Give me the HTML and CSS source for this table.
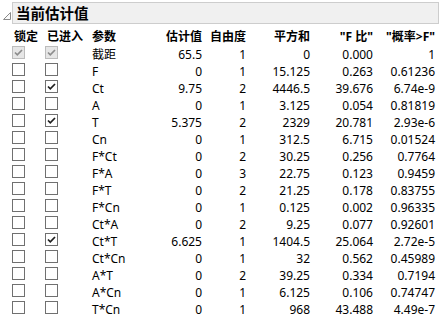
FILE: index.html
```html
<!DOCTYPE html>
<html lang="zh">
<head>
<meta charset="utf-8">
<link rel="stylesheet" href="styles.css">
</head>
<body>
<div class="titlebar">
  <svg class="tri" width="8" height="8" viewBox="0 0 8 8"><path d="M0.5 7.5 L7.5 0.5 L7.5 7.5 Z" fill="#fafafa" stroke="#8a8a8a" stroke-width="1"/></svg>
  <div class="titlebox">当前估计值</div>
</div>
<div class="table">
  <div class="row head">
    <div class="c1">锁定</div><div class="c2">已进入</div><div class="c3">参数</div>
    <div class="num">估计值</div><div class="num">自由度</div><div class="num">平方和</div><div class="num">"F 比"</div><div class="num">"概率&gt;F"</div>
  </div>
  <div class="row"><div class="c1"><span class="cb dis"><svg class="chk" viewBox="0 0 11 11"><path d="M2 5.5 L4.3 7.8 L9 3"/></svg></span></div><div class="c2"><span class="cb dis"><svg class="chk" viewBox="0 0 11 11"><path d="M2 5.5 L4.3 7.8 L9 3"/></svg></span></div><div class="c3">截距</div><div class="num">65.5</div><div class="num">1</div><div class="num">0</div><div class="num">0.000</div><div class="num">1</div></div>
  <div class="row"><div class="c1"><span class="cb"></span></div><div class="c2"><span class="cb"></span></div><div class="c3">F</div><div class="num">0</div><div class="num">1</div><div class="num">15.125</div><div class="num">0.263</div><div class="num">0.61236</div></div>
  <div class="row"><div class="c1"><span class="cb"></span></div><div class="c2"><span class="cb"><svg class="chk" viewBox="0 0 11 11"><path d="M2 5.5 L4.3 7.8 L9 3"/></svg></span></div><div class="c3">Ct</div><div class="num">9.75</div><div class="num">2</div><div class="num">4446.5</div><div class="num">39.676</div><div class="num">6.74e-9</div></div>
  <div class="row"><div class="c1"><span class="cb"></span></div><div class="c2"><span class="cb"></span></div><div class="c3">A</div><div class="num">0</div><div class="num">1</div><div class="num">3.125</div><div class="num">0.054</div><div class="num">0.81819</div></div>
  <div class="row"><div class="c1"><span class="cb"></span></div><div class="c2"><span class="cb"><svg class="chk" viewBox="0 0 11 11"><path d="M2 5.5 L4.3 7.8 L9 3"/></svg></span></div><div class="c3">T</div><div class="num">5.375</div><div class="num">2</div><div class="num">2329</div><div class="num">20.781</div><div class="num">2.93e-6</div></div>
  <div class="row"><div class="c1"><span class="cb"></span></div><div class="c2"><span class="cb"></span></div><div class="c3">Cn</div><div class="num">0</div><div class="num">1</div><div class="num">312.5</div><div class="num">6.715</div><div class="num">0.01524</div></div>
  <div class="row"><div class="c1"><span class="cb"></span></div><div class="c2"><span class="cb"></span></div><div class="c3">F*Ct</div><div class="num">0</div><div class="num">2</div><div class="num">30.25</div><div class="num">0.256</div><div class="num">0.7764</div></div>
  <div class="row"><div class="c1"><span class="cb"></span></div><div class="c2"><span class="cb"></span></div><div class="c3">F*A</div><div class="num">0</div><div class="num">3</div><div class="num">22.75</div><div class="num">0.123</div><div class="num">0.9459</div></div>
  <div class="row"><div class="c1"><span class="cb"></span></div><div class="c2"><span class="cb"></span></div><div class="c3">F*T</div><div class="num">0</div><div class="num">2</div><div class="num">21.25</div><div class="num">0.178</div><div class="num">0.83755</div></div>
  <div class="row"><div class="c1"><span class="cb"></span></div><div class="c2"><span class="cb"></span></div><div class="c3">F*Cn</div><div class="num">0</div><div class="num">1</div><div class="num">0.125</div><div class="num">0.002</div><div class="num">0.96335</div></div>
  <div class="row"><div class="c1"><span class="cb"></span></div><div class="c2"><span class="cb"></span></div><div class="c3">Ct*A</div><div class="num">0</div><div class="num">2</div><div class="num">9.25</div><div class="num">0.077</div><div class="num">0.92601</div></div>
  <div class="row"><div class="c1"><span class="cb"></span></div><div class="c2"><span class="cb"><svg class="chk" viewBox="0 0 11 11"><path d="M2 5.5 L4.3 7.8 L9 3"/></svg></span></div><div class="c3">Ct*T</div><div class="num">6.625</div><div class="num">1</div><div class="num">1404.5</div><div class="num">25.064</div><div class="num">2.72e-5</div></div>
  <div class="row"><div class="c1"><span class="cb"></span></div><div class="c2"><span class="cb"></span></div><div class="c3">Ct*Cn</div><div class="num">0</div><div class="num">1</div><div class="num">32</div><div class="num">0.562</div><div class="num">0.45989</div></div>
  <div class="row"><div class="c1"><span class="cb"></span></div><div class="c2"><span class="cb"></span></div><div class="c3">A*T</div><div class="num">0</div><div class="num">2</div><div class="num">39.25</div><div class="num">0.334</div><div class="num">0.7194</div></div>
  <div class="row"><div class="c1"><span class="cb"></span></div><div class="c2"><span class="cb"></span></div><div class="c3">A*Cn</div><div class="num">0</div><div class="num">1</div><div class="num">6.125</div><div class="num">0.106</div><div class="num">0.74747</div></div>
  <div class="row"><div class="c1"><span class="cb"></span></div><div class="c2"><span class="cb"></span></div><div class="c3">T*Cn</div><div class="num">0</div><div class="num">1</div><div class="num">968</div><div class="num">43.488</div><div class="num">4.49e-7</div></div>
</div>
</body>
</html>
```
FILE: styles.css
```css
html, body {
  margin: 0;
  background: #ffffff;
}
body {
  font-family: "Noto Sans", "Noto Sans CJK SC", sans-serif;
  font-size: 12px;
  color: #000;
}
.titlebar {
  display: flex;
  align-items: flex-start;
  padding: 2px 3px 0 3px;
}
.tri {
  margin-top: 10px;
  flex: none;
}
.titlebox {
  flex: 1;
  margin-left: 1px;
  height: 22px;
  box-sizing: border-box;
  border: 1px solid #cdcdcd;
  background: #f0f0f0;
  padding-left: 3px;
  font-size: 14.5px;
  font-weight: bold;
  line-height: 20px;
}
.table {
  margin-top: 4px;
}
.row {
  display: grid;
  grid-template-columns: 33px 47px 70px 52px 44px 64px 63px 62px;
  height: 17px;
  line-height: 17px;
  white-space: nowrap;
}
.row.head {
  height: 18px;
  line-height: 18px;
  font-weight: bold;
}
.c1, .c2, .c3 {
  padding-left: 12px;
}
.head .c1, .head .c2 {
  padding-left: 14px;
}
.num {
  text-align: right;
}
.cb {
  display: block;
  width: 13px;
  height: 13px;
  box-sizing: border-box;
  border: 1px solid #707070;
  background: #fff;
}
.chk {
  display: block;
  width: 11px;
  height: 11px;
  fill: none;
  stroke: #1e1e1e;
  stroke-width: 1.7;
}
.cb.dis {
  border-color: #bcbcbc;
  background: #e6e6e6;
}
.cb.dis .chk {
  stroke: #8c8c8c;
}
```
